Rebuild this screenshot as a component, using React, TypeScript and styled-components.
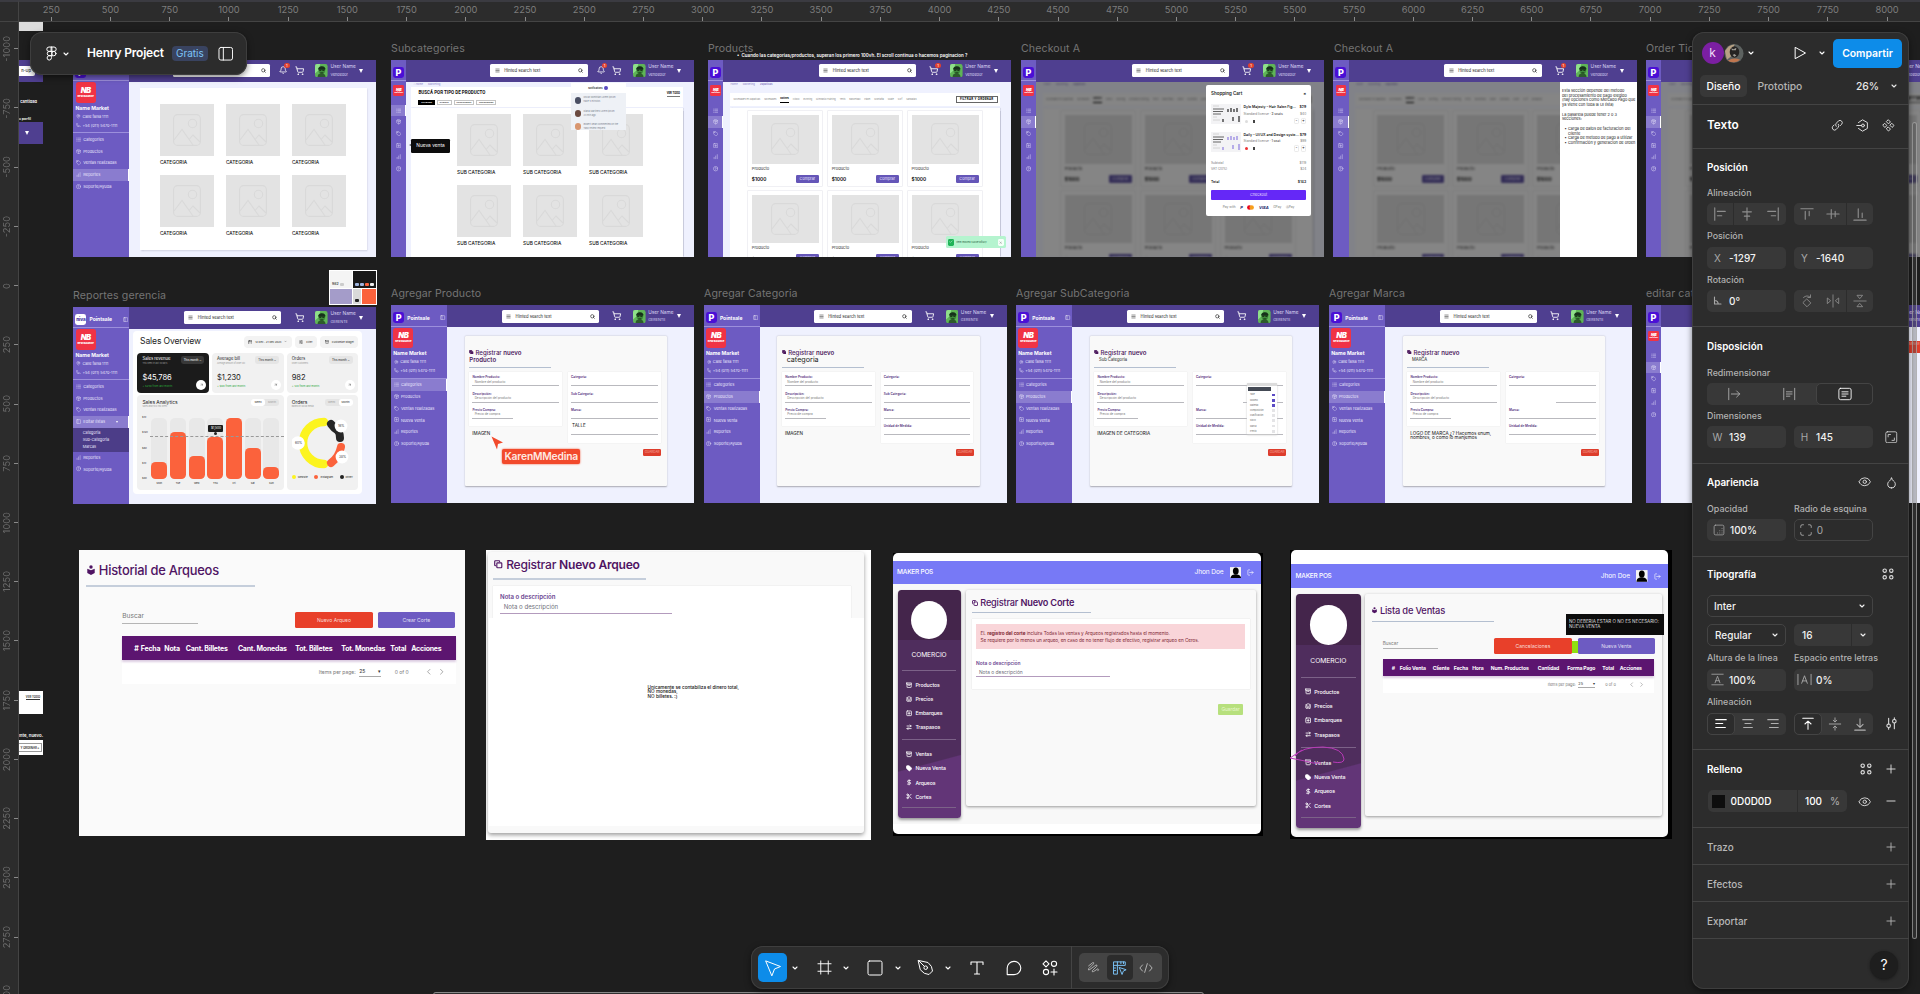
import React from 'react';
import styled, { createGlobalStyle, css } from 'styled-components';
import {
  List, Package, Tag, SquarePlus, ChartNoAxesColumnIncreasing, CircleQuestionMark, Search, Menu, ShoppingCart,
  Bell, MapPin, Phone, PanelLeft, ChevronDown, Eye, Droplet, Plus, Minus, Check, X, LogOut, Copy,
  Calendar, SlidersHorizontal, ArrowUpRight, Archive, Layers, Scissors, DollarSign, ArrowRightLeft, ChevronLeft, ChevronRight,
} from 'lucide-react';

const Global = createGlobalStyle`
  * { box-sizing: border-box; }
  html, body { margin: 0; padding: 0; background: #1e1e1e; overflow: hidden; }
  body { font-family: Inter, "Liberation Sans", sans-serif; -webkit-font-smoothing: antialiased; }
  svg { display: block; flex: none; }
`;

/* ---------- application shell ---------- */

const Shell = styled.div`
  position: relative;
  width: 1920px;
  height: 994px;
  overflow: hidden;
  display: grid;
  grid-template: 22px 972px / 19px 1901px;
  background: #1e1e1e;
`;
const Corner = styled.div`
  background: #2c2c2c;
  border-top: 2px solid #3b3b41;
  border-right: 1px solid #444;
  border-bottom: 1px solid #444;
`;
const RulerTop = styled.div`
  display: flex;
  overflow: hidden;
  background: #2c2c2c;
  border-top: 2px solid #3b3b41;
  border-bottom: 1px solid #444;
  padding-left: 2.7px;
`;
const TopMark = styled.div`
  flex: none;
  width: 59.23px;
  height: 19px;
  display: flex;
  flex-direction: column;
  align-items: center;
  justify-content: space-between;
  font-size: 9.3px;
  line-height: 15px;
  color: #7d7d7d;
  &::after { content: ''; width: 1px; height: 4px; background: #8a8a8a; }
`;
const RulerLeft = styled.div`
  overflow: hidden;
  background: #2c2c2c;
  border-right: 1px solid #444;
`;
const LeftMarks = styled.div`
  margin-top: -2.9px;
  display: flex;
  flex-direction: column;
`;
const LeftMark = styled.div`
  height: 59.23px;
  display: flex;
  align-items: center;
  justify-content: space-between;
  font-size: 9.3px;
  line-height: 13px;
  color: #6c6c6c;
  span { writing-mode: vertical-rl; transform: rotate(180deg); }
  &::after { content: ''; width: 4px; height: 1px; background: #8a8a8a; }
`;
const Canvas = styled.div`
  position: relative;
  overflow: hidden;
`;
const Origin = styled.div`
  position: absolute;
  left: -19px;
  top: -22px;
`;
type Box = { $x: number; $y: number; $w?: number; $h?: number };
const place = css<Box>`
  position: absolute;
  left: ${p => p.$x}px;
  top: ${p => p.$y}px;
  ${p => p.$w && `width: ${p.$w}px;`}
  ${p => p.$h && `height: ${p.$h}px;`}
`;
const FrameName = styled.div<Box>`
  ${place}
  font-size: 10.6px;
  line-height: 14px;
  letter-spacing: 0.1px;
  white-space: nowrap;
  color: #747474;
`;
const Frame = styled.div<Box>`
  ${place}
  overflow: hidden;
  display: flex;
  background: #eff1fe;
`;
const Main = styled.div`
  flex: 1;
  min-width: 0;
  display: flex;
  flex-direction: column;
`;

/* ---------- shop header ---------- */

const Header = styled.div<{ $lead: number }>`
  flex: none;
  height: 21.6px;
  background: #4f3f90;
  display: grid;
  grid-template-columns: ${p => p.$lead}px 97.3px 1fr 61px;
  align-items: center;
  color: #fff;
`;
const SearchBox = styled.div`
  grid-column: 2;
  height: 13.3px;
  border-radius: 1.6px;
  background: #fff;
  color: #222;
  display: flex;
  align-items: center;
  gap: 4.4px;
  padding: 0 4.4px;
  font-size: 4.2px;
  span { flex: 1; white-space: nowrap; }
`;
const HeaderIcons = styled.div`
  display: flex;
  justify-content: flex-end;
  gap: 7px;
  padding-right: 11.5px;
`;
const IconSlot = styled.div`
  position: relative;
`;
const Badge = styled.div`
  position: absolute;
  right: -2px;
  top: -3.4px;
  width: 5.4px;
  height: 5.6px;
  border-radius: 3px;
  background: #e2412f;
  color: #fff;
  font-size: 4px;
  line-height: 5.6px;
  text-align: center;
`;
const User = styled.div`
  display: flex;
  align-items: center;
  gap: 2.4px;
`;
const UserText = styled.div`
  width: 25px;
  font-size: 4.8px;
  line-height: 7.4px;
  white-space: nowrap;
  color: #d9d3f2;
  small { display: block; font-size: 3.8px; }
`;
const Triangle = styled.i<{ $s?: number }>`
  border: ${p => p.$s ?? 2.2}px solid transparent;
  border-top: ${p => (p.$s ?? 2.2) * 2}px solid #fff;
  border-bottom: 0;
  margin-left: 1.6px;
`;

const Face = () => (
  <svg width="12.6" height="13.2" viewBox="0 0 24 25">
    <rect width="24" height="25" rx="4" fill="#5fb457" />
    <path d="M0 4Q0 0 4 0H10L7 12L0 18Z" fill="#8fe08a" />
    <path d="M5 25C5 19 8 18 12 18S20 19 20 25Z" fill="#2d5a2b" />
    <ellipse cx="13" cy="11.5" rx="6.5" ry="7.5" fill="#3f8a3c" />
    <path d="M6 9C7 3 18 2 20 9L19 11H7Z" fill="#16301a" />
    <path d="M8 12H12M14 12H18M10 17H16" stroke="#12240f" strokeWidth="1.8" />
  </svg>
);

const ShopHeader = ({ lead, bell, badge, role = 'GERENTE' }: { lead: number; bell?: boolean; badge?: boolean; role?: string }) => (
  <Header $lead={lead}>
    <SearchBox><Menu size={5} strokeWidth={2.4} /><span>Hinted search text</span><Search size={5} strokeWidth={3} /></SearchBox>
    <HeaderIcons>
      {bell && <IconSlot><Bell size={8.4} strokeWidth={2.2} /><Badge>1</Badge></IconSlot>}
      <IconSlot><ShoppingCart size={9.4} strokeWidth={2.2} />{badge && <Badge>1</Badge>}</IconSlot>
    </HeaderIcons>
    <User><Face /><UserText>User Name<small>{role}</small></UserText><Triangle /></User>
  </Header>
);

/* ---------- shop sidebars ---------- */

const Side = styled.div<{ $w: number }>`
  flex: none;
  width: ${p => p.$w}px;
  background: #6d5bc2;
  color: #e9e5fb;
  display: flex;
  flex-direction: column;
`;
const BrandRow = styled.div<{ $center?: boolean }>`
  height: 21.2px;
  padding: 4.5px 1.6px 0 ${p => (p.$center ? 2 : 2.2)}px;
  border-bottom: 1px solid #9c8fdc;
  display: flex;
  align-items: center;
  gap: 3px;
  font-size: 5px;
  font-weight: 700;
  color: #fff;
  span { flex: 1; white-space: nowrap; }
`;
const PLogo = styled.div<{ $light?: boolean }>`
  flex: none;
  width: 11px;
  height: 11px;
  border-radius: 2.4px;
  background: ${p => (p.$light ? '#fff' : '#4a0fd6')};
  color: ${p => (p.$light ? '#4636a0' : '#fff')};
  font-size: ${p => (p.$light ? 4.6 : 9)}px;
  font-weight: 800;
  line-height: 11px;
  text-align: center;
`;
const RedLogo = styled.div<{ $s: number; $mt: number; $ml: number }>`
  flex: none;
  width: ${p => p.$s}px;
  height: ${p => p.$s}px;
  margin: ${p => p.$mt}px 0 0 ${p => p.$ml}px;
  border-radius: ${p => p.$s * 0.13}px;
  background: #f03345;
  color: #fff;
  font-weight: 900;
  font-style: italic;
  font-size: ${p => p.$s * 0.38}px;
  line-height: ${p => p.$s * 0.4}px;
  letter-spacing: -0.06em;
  padding-top: ${p => p.$s * 0.22}px;
  text-align: center;
  small { display: block; font-style: normal; font-size: ${p => p.$s * 0.13}px; line-height: ${p => p.$s * 0.16}px; letter-spacing: 0; }
`;
const Store = styled.div`
  height: 30.6px;
  border-bottom: 1px solid #9c8fdc;
  padding: 2.2px 0 0 2.2px;
  font-size: 3.8px;
  white-space: nowrap;
  b { display: block; font-size: 5.1px; line-height: 7.4px; color: #fff; }
  div { display: flex; align-items: center; gap: 1.6px; height: 8.6px; padding-left: 0.8px; }
`;
const NavList = styled.div`
  display: flex;
  flex-direction: column;
  padding-top: 0.6px;
`;
const NavItem = styled.div<{ $on?: boolean }>`
  height: 11.7px;
  display: flex;
  align-items: center;
  gap: 2px;
  padding-left: 2.8px;
  font-size: 4px;
  white-space: nowrap;
  background: ${p => (p.$on ? '#8a7ccf' : 'transparent')};
  border-right: ${p => (p.$on ? '1.4px solid #fff' : '0')};
`;
const SubNav = styled.div`
  height: 24px;
  background: #4c3d88;
  padding: 1.4px 0 0 9.5px;
  font-size: 3.8px;
  line-height: 7px;
`;
const RailIcons = styled.div`
  margin-top: 8.6px;
`;
const RailItem = styled.div<{ $on?: boolean }>`
  height: 11.7px;
  display: flex;
  align-items: center;
  justify-content: center;
  background: ${p => (p.$on ? '#8a7ccf' : 'transparent')};
  border-right: ${p => (p.$on ? '1px solid #fff' : '0')};
`;

const navIcons: Record<string, typeof List> = {
  Categories: List, Productos: Package, 'Ventas realizadas': Tag, 'Editar listas': PanelLeft,
  'Nueva venta': SquarePlus, Reportes: ChartNoAxesColumnIncreasing, 'Soporte/Ayuda': CircleQuestionMark,
};

const WideSide = ({ items, active, mrk }: { items: string[]; active: string; mrk?: boolean }) => (
  <Side $w={56.2}>
    <BrandRow><PLogo $light={mrk}>{mrk ? 'niva' : 'P'}</PLogo><span>Pointsale</span><PanelLeft size={5.4} strokeWidth={1.8} /></BrandRow>
    <RedLogo $s={20.2} $mt={1.2} $ml={2.3}>NB<small>new balance</small></RedLogo>
    <Store>
      <b>Name Market</b>
      <div><MapPin size={4.6} />Calle falsa 1111</div>
      <div><Phone size={4.6} />+54 (011) 5470-1111</div>
    </Store>
    <NavList>
      {items.map(n => {
        const Icon = navIcons[n];
        return (
          <React.Fragment key={n}>
            <NavItem $on={n === active}>
              <Icon size={5.2} />{n}{n === 'Editar listas' && <Triangle $s={1.2} style={{ marginLeft: 9 }} />}
            </NavItem>
            {n === 'Editar listas' && <SubNav>Categoria<br />Sub-Categoria<br />Marcas</SubNav>}
          </React.Fragment>
        );
      })}
    </NavList>
  </Side>
);

const Rail = ({ active }: { active: number }) => (
  <Side $w={15.4}>
    <BrandRow $center><PLogo>P</PLogo></BrandRow>
    <RedLogo $s={10.6} $mt={4.2} $ml={2.4}>NB<small>new balance</small></RedLogo>
    <RailIcons>
      {[List, Package, Tag, SquarePlus, ChartNoAxesColumnIncreasing, CircleQuestionMark].map((Icon, i) => (
        <RailItem key={i} $on={i === active}><Icon size={5.4} /></RailItem>
      ))}
    </RailIcons>
  </Side>
);

/* ---------- category boards ---------- */

const Sheet = styled.div`
  flex: 1;
  margin: 6.2px 9.2px 7px 10.6px;
  padding: 16.3px 0 0 19.8px;
  background: #fff;
  box-shadow: 0.6px 1px 1.5px #c9cbdc;
`;
const TileGrid = styled.div`
  display: grid;
  grid-template-columns: repeat(3, 54px);
  column-gap: 12px;
  row-gap: 12.3px;
  font-size: 4.75px;
  font-weight: 500;
  line-height: 6px;
  color: #111;
`;
const Pic = styled.div<{ $h: number }>`
  height: ${p => p.$h}px;
  background: #e3e3e3;
  display: flex;
  align-items: center;
  justify-content: center;
`;
const PicLabel = styled.div`
  padding-top: 2.9px;
  height: 6.8px;
  white-space: nowrap;
`;
const Photo = ({ h }: { h: number }) => (
  <Pic $h={h}>
    <svg width="28" height="32" viewBox="0 0 28 32" fill="none" stroke="#d9d9d9" strokeWidth="1.1">
      <rect x="0.6" y="0.6" width="26.8" height="30.8" rx="4" />
      <circle cx="19.5" cy="9.5" r="4.2" />
      <path d="M1 26L9 15.5L20 31M16 25.5L20 21L27 28" />
    </svg>
  </Pic>
);
const Tiles = ({ text }: { text: string }) => (
  <TileGrid>
    {[0, 1, 2, 3, 4, 5].map(i => <div key={i}><Photo h={51.9} /><PicLabel>{text}</PicLabel></div>)}
  </TileGrid>
);
const Crumbs = styled.div<{ $h: number }>`
  height: ${p => p.$h}px;
  padding-left: 7px;
  font-size: 2.6px;
  line-height: 5.6px;
  color: #8d83c6;
  display: flex;
  gap: 5px;
`;
const Finder = styled.div`
  height: 19.8px;
  margin: 0 11px 0 4.7px;
  padding: 2.8px 3.3px 0 7.4px;
  background: #fff;
  display: flex;
  justify-content: space-between;
`;
const FinderTitle = styled.div`
  font: 700 4.5px/6.6px Roboto, sans-serif;
  color: #111;
  white-space: nowrap;
`;
const Pills = styled.div`
  display: flex;
  gap: 2px;
  margin-top: 2.8px;
`;
const Pill = styled.div<{ $on?: boolean }>`
  height: 5.2px;
  padding: 0 1.8px;
  font: 700 2.4px/3.4px Roboto, sans-serif;
  border: 1px solid ${p => (p.$on ? '#000' : '#c4c4c4')};
  color: ${p => (p.$on ? '#fff' : '#333')};
  background: ${p => (p.$on ? '#000' : '#fff')};
`;
const SeeAll = styled.div`
  align-self: flex-start;
  margin-top: 0.6px;
  font: 700 2.8px/5px Roboto, sans-serif;
  color: #111;
  border-bottom: 1px solid #777;
`;
const SubSheet = styled.div`
  flex: 1;
  margin: 0.7px 11px 0 4.7px;
  padding: 5.9px 0 0 46px;
  background: #fff;
  box-shadow: 0.8px 0 1px #c9cbdc;
`;
const Tooltip = styled.div`
  position: absolute;
  left: 20.2px;
  top: 78.8px;
  width: 38.6px;
  height: 13.8px;
  border-radius: 1.2px;
  background: #0c0c0c;
  color: #fff;
  font-size: 4.8px;
  line-height: 13.8px;
  text-align: center;
  &::before { content: ''; position: absolute; left: -2.6px; top: 5px; border: 1.8px solid transparent; border-left: 0; border-right: 3px solid #0c0c0c; }
`;
const Notes = styled.div`
  position: absolute;
  left: 179.6px;
  top: 22.7px;
  width: 55px;
  height: 47.4px;
  background: #eef1f6;
  font-size: 2.3px;
  color: #7b828e;
`;
const NotesHead = styled.div`
  height: 10.8px;
  background: #fff;
  display: flex;
  align-items: center;
  justify-content: center;
  gap: 1.6px;
  font-weight: 600;
  color: #222;
  i { width: 3.8px; height: 3.8px; border-radius: 50%; background: #5a4bc0; }
`;
const NoteRow = styled.div<{ $c: string }>`
  height: 13.4px;
  display: flex;
  align-items: center;
  gap: 3px;
  padding-left: 4px;
  line-height: 4px;
  &::before { content: ''; width: 6px; height: 7px; border-radius: 3px; background: ${p => p.$c}; }
`;

/* ---------- product board ---------- */

const Veil = styled.div<{ $dim?: boolean }>`
  flex: 1;
  min-height: 0;
  display: flex;
  overflow: hidden;
  background: ${p => (p.$dim ? '#818288' : '#eff1fe')};
`;
const ProductArea = styled.div<{ $dim?: boolean }>`
  flex: 1;
  min-width: 0;
  display: flex;
  flex-direction: column;
  overflow: hidden;
  ${p => p.$dim && 'filter: blur(1px) brightness(0.52) saturate(0.8);'}
`;
const Filters = styled.div`
  flex: none;
  height: 13.6px;
  margin: 0 11.4px 1.2px 6.2px;
  padding: 0 2.2px 0 4px;
  background: #fff;
  display: flex;
  align-items: center;
  gap: 3.9px;
  font-size: 2.3px;
  white-space: nowrap;
  color: #888;
  b { color: #000; line-height: 6px; border-bottom: 1px solid #000; }
`;
const OrderBtn = styled.div`
  margin-left: auto;
  height: 6.8px;
  padding: 0 3px;
  border: 1px solid #666;
  font: 700 3px/5px Roboto, sans-serif;
  letter-spacing: 0.3px;
  color: #000;
`;
const Products = styled.div`
  flex: 1;
  min-height: 0;
  margin: 0 11.4px 0 6.2px;
  padding: 2.8px 0 0 17.6px;
  background: #fff;
  box-shadow: 0.8px 0 1px #c4c6d8;
  display: grid;
  grid-template-columns: repeat(3, 76.2px);
  grid-auto-rows: 76.4px;
  gap: 3.3px 3.7px;
`;
const Product = styled.div`
  padding: 3.8px 3.6px;
  border: 1px solid #f0f0f4;
  border-radius: 1px;
  font-size: 4.1px;
  line-height: 6px;
  color: #333;
  p { margin: 1.8px 0 3.2px; }
`;
const BuyRow = styled.div`
  display: flex;
  align-items: center;
  justify-content: space-between;
  font-size: 4.8px;
  font-weight: 600;
  color: #000;
  span { width: 22.6px; height: 8.4px; border-radius: 1.2px; background: #6556b8; color: #e6e1ff; font-size: 3.8px; font-weight: 400; line-height: 8.4px; text-align: center; }
`;
const Toast = styled.div`
  position: absolute;
  left: 238px;
  top: 176.4px;
  width: 59.5px;
  height: 11.8px;
  border-radius: 1.6px;
  background: #b5f4cf;
  display: flex;
  align-items: center;
  gap: 2.2px;
  padding: 0 1.6px;
  font-size: 2.6px;
  color: #205c38;
  span { flex: 1; white-space: nowrap; }
`;
const ToastIcon = styled.div<{ $ok?: boolean }>`
  width: 6.4px;
  height: 7px;
  border-radius: 1.4px;
  background: ${p => (p.$ok ? '#1fb457' : '#f4fff8')};
  color: ${p => (p.$ok ? '#fff' : '#444')};
  display: flex;
  align-items: center;
  justify-content: center;
`;
const tabs = ['Novedades en Zapatillas', 'Novedades', 'Botines', 'Fútbol', 'Running', 'Gimnasio/Training', 'Tenis', 'Basketball', 'Pádel', 'Montaña', 'Skate', 'Surf', 'Sandalias'];
const ProductBoard = ({ dim }: { dim?: boolean }) => (
  <Veil $dim={dim}>
    <ProductArea $dim={dim}>
      <Crumbs $h={11.2}><span>Home</span><span>Marketing</span><b>Zapatillas</b></Crumbs>
      <Filters>
        {tabs.map(t => (t === 'Botines' ? <b key={t}>{t}</b> : <span key={t}>{t}</span>))}
        <OrderBtn>FILTRAR Y ORDENAR</OrderBtn>
      </Filters>
      <Products>
        {[0, 1, 2, 3, 4, 5].map(i => (
          <Product key={i}><Photo h={48.6} /><p>Producto</p><BuyRow>$1000<span>Comprar</span></BuyRow></Product>
        ))}
      </Products>
    </ProductArea>
  </Veil>
);

/* ---------- checkout overlays ---------- */

const Cart = styled.div`
  position: absolute;
  left: 185.2px;
  top: 25px;
  width: 104.8px;
  height: 130.8px;
  border-radius: 2px;
  background: #fff;
  padding: 5.6px 4.8px 4.6px;
  display: flex;
  flex-direction: column;
  font-size: 3.2px;
  color: #777;
`;
const CartHead = styled.div`
  display: flex;
  justify-content: space-between;
  font-size: 4.5px;
  font-weight: 600;
  line-height: 6px;
  color: #1a1a1a;
  margin-bottom: 7.8px;
`;
const CartItem = styled.div`
  display: flex;
  gap: 2.6px;
  height: 28.4px;
`;
const CartThumb = styled.div`
  width: 30px;
  height: 20px;
  background: #f3f3f5;
`;
const CartInfo = styled.div`
  flex: 1;
  line-height: 5.6px;
`;
const CartLine = styled.div<{ $bold?: boolean; $mt?: number }>`
  display: flex;
  justify-content: space-between;
  align-items: center;
  margin-top: ${p => p.$mt ?? 0}px;
  line-height: 6.2px;
  white-space: nowrap;
  ${p => p.$bold && 'color: #1a1a1a; font-weight: 600; font-size: 3.5px;'}
`;
const Steps = styled.div`
  display: flex;
  gap: 1.4px;
  i { width: 5.6px; height: 6.6px; border: 1px solid #ebebeb; border-radius: 1.2px; font: 600 4px/4px Inter; text-align: center; color: #333; }
`;
const Swatches = styled.div<{ $c: string }>`
  display: flex;
  gap: 5px;
  padding-left: 1.8px;
  &::before { content: ''; width: 3px; height: 3px; border-radius: 50%; background: ${p => p.$c}; }
  &::after { content: ''; width: 2px; height: 3px; background: #444; }
`;
const PayBtn = styled.div`
  height: 10px;
  margin-top: 4.6px;
  border-radius: 1px;
  background: #6528f7;
  color: #e4dcff;
  font-size: 3.8px;
  line-height: 10px;
  text-align: center;
`;
const PayWith = styled.div`
  display: flex;
  align-items: center;
  justify-content: center;
  gap: 4.6px;
  margin-top: 4px;
  line-height: 7px;
  b { font-size: 4px; font-style: italic; color: #17246b; }
  svg { width: 7px; height: 5px; }
`;
const ThumbArt = ({ tone }: { tone: string }) => (
  <CartThumb>
    <svg width="30" height="20" viewBox="0 0 30 20">
      <path d="M2 5H13M2 7.5H12M2 10H10" stroke="#555" strokeWidth="0.9" />
      <path d="M2 2H8M2 13H6M2 16H9" stroke="#ccc" strokeWidth="0.8" />
      <path d="M17 8V5M20 8V4M23 8V5M26 8V4M12 18V15M22 17V13M28 18V12" stroke={tone} strokeWidth="1.2" />
    </svg>
  </CartThumb>
);
const CartPanel = () => (
  <Cart>
    <CartHead><span>Shopping Cart</span><span>×</span></CartHead>
    {[['Dyle Majesty – Hair Salon Fig…', '2 seats', '$29', '$40', '#222', '#ddd'], ['Daily – UI/UX and Design syste…', '1 seat', '$79', '$99', '#8f7fe0', '#e33']].map(r => (
      <CartItem key={r[0]}>
        <ThumbArt tone={r[4]} />
        <CartInfo>
          <CartLine $bold><span>{r[0]}</span><span>{r[2]}</span></CartLine>
          <CartLine><span>Standard license · <b>{r[1]}</b></span><span>{r[3]}</span></CartLine>
          <CartLine $mt={1}><Swatches $c={r[5]} /><Steps><i>-</i><i>+</i></Steps></CartLine>
        </CartInfo>
      </CartItem>
    ))}
    <CartLine $mt={0.5}><span>Subtotal</span><span>$119</span></CartLine>
    <CartLine><span>VAT (20%)</span><span>$24</span></CartLine>
    <CartLine $bold $mt={7}><span>Total</span><span>$143</span></CartLine>
    <PayBtn>Checkout</PayBtn>
    <PayWith>
      Pay with <b>P</b>
      <svg viewBox="0 0 14 10"><circle cx="4.6" cy="5" r="4.4" fill="#eb001b" /><circle cx="9.4" cy="5" r="4.4" fill="#f79e1b" /></svg>
      <b>VISA</b><span>GPay</span><span>ⓐPay</span>
    </PayWith>
  </Cart>
);
const PayInfo = styled.div`
  position: absolute;
  left: 227px;
  top: 21.6px;
  width: 76.4px;
  height: 176px;
  background: #fff;
  color: #222;
  padding: 7.3px 0 0 1.6px;
  font-size: 3.9px;
  line-height: 4.77px;
  white-space: nowrap;
  ul { margin: 4.7px 0 0; padding-left: 6px; list-style: none; }
  li::before { content: '•'; display: inline-block; width: 3.6px; margin-left: -3.6px; }
`;

/* ---------- register forms ---------- */

const FormCard = styled.div`
  width: 202.8px;
  height: 150.8px;
  margin: 8.7px 0 0 17.5px;
  padding: 12.6px 0 0 4.6px;
  background: #f9f9f9;
  border-radius: 1px;
  box-shadow: 0 0.8px 1.6px #a9a9b2;
`;
const FormTitle = styled.div`
  display: flex;
  align-items: center;
  gap: 1.8px;
  height: 8px;
  font-size: 6.1px;
  font-weight: 500;
  color: #4d1a5e;
  white-space: nowrap;
  b { font-weight: 600; }
`;
const FormSub = styled.div<{ $k: string }>`
  height: 8px;
  line-height: 8.6px;
  padding-left: ${p => (p.$k === 'purple' ? 0 : 4.7)}px;
  font-size: ${p => (p.$k === 'purple' ? 6.1 : p.$k === 'big' ? 7.2 : 4.2)}px;
  font-weight: ${p => (p.$k === 'purple' ? 600 : 400)};
  color: ${p => (p.$k === 'purple' ? '#4d1a5e' : '#1a1a1a')};
`;
const Rule = styled.div<{ $w: number; $m: string }>`
  width: ${p => p.$w}px;
  height: 1px;
  margin: ${p => p.$m};
  background: #b4bfd0;
`;
const ThickRule = styled(Rule)`
  height: 1.6px;
  background: #c5cedb;
`;
const FormCols = styled.div`
  display: flex;
  gap: 5.8px;
`;
const FormCol = styled.div`
  width: 92.8px;
  display: flex;
  flex-direction: column;
`;
const FormBox = styled.div<{ $h: number }>`
  height: ${p => p.$h}px;
  padding: 3.7px 3.2px;
  background: #fff;
  box-shadow: 0 0 1px #ddd;
`;
const Field = styled.div<{ $w?: number; $off?: number }>`
  height: 16.2px;
  font-size: 3.05px;
  line-height: 5.2px;
  color: #777;
  b { display: block; height: 4.6px; line-height: 4.6px; font-size: 3.1px; color: #6a4a8c; }
  p { margin: 0; height: 6.4px; width: ${p => p.$w ?? 86.6}px; padding-left: 2.2px; border-bottom: 1px solid #b9b9be; margin-left: ${p => p.$off ?? 0}px; white-space: nowrap; }
`;
const FormNote = styled.div`
  margin: 5.2px 0 0 3px;
  font-size: 4.6px;
  line-height: 4.9px;
  color: #111;
  white-space: pre;
`;
const SaveBtn = styled.div`
  align-self: flex-end;
  width: 17.8px;
  height: 7.8px;
  margin: 6px -0.4px 0 0;
  border-radius: 1.2px;
  background: #dd3d2c;
  color: #f6a99f;
  font-size: 3.1px;
  line-height: 7.8px;
  text-align: center;
`;
const Options = styled.div`
  position: absolute;
  left: 231px;
  top: 77.4px;
  width: 30px;
  height: 51.6px;
  background: #fff;
  box-shadow: 0 0.5px 2px #ccc;
  font-size: 2.2px;
  color: #666;
  header { height: 3.4px; background: #dcdcdc; }
  nav { width: 23px; height: 4px; margin: 0.6px 0 1.6px 1px; background: #444a55; }
`;
const Option = styled.div<{ $on: boolean }>`
  height: 5.2px;
  display: flex;
  align-items: center;
  justify-content: space-between;
  padding: 0 2px 0 3px;
  &::after { content: ''; width: 2.6px; height: 2.8px; background: ${p => (p.$on ? '#5b4bc4' : '#e4e4e6')}; }
`;

const fullNav = ['Categories', 'Productos', 'Ventas realizadas', 'Nueva venta', 'Reportes', 'Soporte/Ayuda'];

type FormProps = { x: number; active: string; sub: string; kind: string; note: string; right: string[]; off?: number; menu?: boolean };
const FormFrame = ({ x, active, sub, kind, note, right, off, menu }: FormProps) => (
  <Frame $x={x} $y={305.4} $w={303.2} $h={197.2}>
    <WideSide items={fullNav} active={active} />
    <Main>
      <ShopHeader lead={54.6} />
      <FormCard>
        <FormTitle><Copy size={4.4} strokeWidth={3.4} fill="#4d1a5e" /><span>Registrar <b>nuevo</b></span></FormTitle>
        <FormSub $k={kind}>{sub}</FormSub>
        <Rule $w={81.6} $m="2.3px 0 4.2px" />
        <FormCols>
          <FormCol>
            <FormBox $h={54.6}>
              <Field><b>Nombre Producto:</b><p>Nombre del producto</p></Field>
              <Field><b>Descripción:</b><p>Descripción del producto</p></Field>
              <Field $w={40.6}><b>Precio Compra:</b><p>Precio de compra</p></Field>
            </FormBox>
            <FormNote>{note}</FormNote>
          </FormCol>
          <FormCol>
            <FormBox $h={70.8}>
              {right.map((r, i) => (
                <Field key={i} $w={i === 1 && off ? 86.6 - off : undefined} $off={i === 1 ? off : 0}>
                  {r === 'TALLE' ? <FormNote style={{ height: 4.6, margin: '0 0 0 1px' }}>{r}</FormNote> : <b>{r}</b>}<p />
                </Field>
              ))}
            </FormBox>
            <SaveBtn>GUARDAR</SaveBtn>
          </FormCol>
        </FormCols>
      </FormCard>
    </Main>
    {menu && (
      <Options><header /><nav />
        {['Talle', 'Modelo', 'Material', 'Composición', 'Clasificación', 'Stock', 'Marca', 'Precio'].map((o, i) => <Option key={o} $on={i < 3}>{o}</Option>)}
      </Options>
    )}
  </Frame>
);

/* ---------- sales dashboard ---------- */

const Dash = styled.div`
  width: 228.8px;
  height: 162.8px;
  margin: 2.6px 0 0 4px;
  padding: 5px 4px 4px;
  border-radius: 4px;
  background: #fff;
  display: flex;
  flex-direction: column;
  gap: 2.4px;
  color: #1c1c1c;
`;
const DashHead = styled.div`
  height: 14px;
  display: flex;
  align-items: flex-start;
  gap: 3.4px;
  padding-left: 2.6px;
  h3 { flex: 1; margin: 0; font-size: 8.6px; line-height: 11.6px; font-weight: 400; letter-spacing: -0.15px; white-space: nowrap; }
`;
const Chip = styled.div<{ $w: number }>`
  width: ${p => p.$w}px;
  height: 11.6px;
  border-radius: 4px;
  background: #f3f3f3;
  display: flex;
  align-items: center;
  justify-content: center;
  gap: 3px;
  font-size: 2.6px;
  white-space: nowrap;
`;
const DashRow = styled.div<{ $h: number }>`
  height: ${p => p.$h}px;
  display: flex;
  gap: 2.6px;
`;
const Card = styled.div<{ $w: number; $dark?: boolean }>`
  position: relative;
  width: ${p => p.$w}px;
  border-radius: 4px;
  padding: 3.6px 5px;
  background: ${p => (p.$dark ? '#1b1b1b' : '#f1f1f1')};
  color: ${p => (p.$dark ? '#fff' : '#1c1c1c')};
  font-size: 4.2px;
  line-height: 6px;
`;
const CardHead = styled.div`
  display: flex;
  justify-content: space-between;
  white-space: nowrap;
  small { display: block; font-size: 2.1px; line-height: 4px; color: #999; }
`;
const ChartTitle = styled.div`
  font-size: 4.9px;
`;
const MonthTag = styled.div<{ $dark?: boolean }>`
  height: 8px;
  padding: 0 3px;
  border-radius: 2.4px;
  font-size: 2.8px;
  line-height: 8px;
  background: ${p => (p.$dark ? '#383838' : '#e5e5e5')};
`;
const Toggle = styled.div<{ $right?: boolean }>`
  height: 7.6px;
  margin-top: -0.4px;
  border-radius: 2.4px;
  background: #e5e5e5;
  display: flex;
  font-size: 2.7px;
  line-height: 7.6px;
  color: #999;
  span { width: 14px; text-align: center; border-radius: 2.4px; }
  span:${p => (p.$right ? 'last' : 'first')}-child { background: #fff; color: #222; }
`;
const Amount = styled.div`
  margin-top: 6.4px;
  font-size: 7.6px;
  line-height: 10px;
  letter-spacing: -0.1px;
`;
const Gain = styled.div`
  margin-top: 0.8px;
  font-size: 2.7px;
  color: #2aa83a;
`;
const GoDot = styled.div`
  position: absolute;
  right: 3px;
  bottom: 3px;
  width: 10px;
  height: 10px;
  border-radius: 50%;
  background: #fff;
  color: #222;
  display: flex;
  align-items: center;
  justify-content: center;
`;
const Chart = styled.div`
  display: flex;
  gap: 2.7px;
  margin-top: 8.6px;
  padding-left: 8.8px;
  font-size: 2.6px;
  text-align: center;
`;
const Axis = styled.div`
  position: absolute;
  left: 4.6px;
  top: 15px;
  font-size: 2.5px;
  line-height: 15.1px;
`;
const Track = styled.div`
  width: 16px;
  height: 61.4px;
  border-radius: 5px;
  background: #e8e8e8;
  display: flex;
  align-items: flex-end;
  margin-bottom: 1px;
`;
const Bar = styled.div<{ $h: number }>`
  width: 16px;
  height: ${p => p.$h}px;
  border-radius: 4.6px;
  background: #fb623c;
`;
const Dotted = styled.div`
  position: absolute;
  left: 13px;
  right: 0;
  top: 41px;
  border-top: 1px dashed #999;
`;
const BarTip = styled.div`
  position: absolute;
  left: 71px;
  top: 29.5px;
  width: 15px;
  height: 7px;
  border-radius: 1px;
  background: #1b1b1b;
  color: #fff;
  font-size: 3.2px;
  line-height: 7px;
  text-align: center;
  &::after { content: ''; position: absolute; left: 6px; top: 7.4px; width: 3px; height: 3px; border-radius: 50%; background: #222; }
`;
const Legend = styled.div`
  display: flex;
  justify-content: space-between;
  margin-top: 3px;
  font-size: 2.7px;
  span::before { content: ''; display: inline-block; width: 4px; height: 4px; border-radius: 50%; background: var(--c); vertical-align: -0.8px; margin-right: 2px; }
`;
const LegendItem = styled.span<{ $c: string }>`--c: ${p => p.$c};`;

const Dashboard = () => (
  <Dash>
    <DashHead>
      <h3>Sales Overview</h3>
      <Chip $w={48}><Calendar size={4.6} /><span>12 Dec - 21 Dec 2023</span><ChevronDown size={3} /></Chip>
      <Chip $w={22}><SlidersHorizontal size={4} />Filter</Chip>
      <Chip $w={38}><Archive size={4} />Customize widget</Chip>
    </DashHead>
    <DashRow $h={40.6}>
      {[['Sales revenue', 'This week in last 30 days', '$45,786', '+ $250 from last month'], ['Average bill', 'Average amount of order bill', '$1,230', '+ $68 from last month'], ['Orders', 'Order customers', '982', '+ 120 from last month']].map((c, i) => (
        <Card key={c[0]} $w={i === 2 ? 71 : 72} $dark={i === 0}>
          <CardHead><div>{c[0]}<small>{c[1]}</small></div><MonthTag $dark={i === 0}>This month ⌄</MonthTag></CardHead>
          <Amount>{c[2]}</Amount>
          <Gain>{c[3]}</Gain>
          <GoDot><ArrowUpRight size={3.6} /></GoDot>
        </Card>
      ))}
    </DashRow>
    <DashRow $h={95}>
      <Card $w={146.6}>
        <CardHead><ChartTitle>Sales Analytics<small>Sales analytics this week</small></ChartTitle><Toggle><span>Week</span><span>Month</span></Toggle></CardHead>
        <Axis>$1K<br />$12K<br />$6K<br />$1K<br />$0K</Axis>
        <Chart>
          {[['Mon', 17], ['Tue', 47.3], ['Wed', 23.3], ['Thu', 41.7], ['Fri', 61.3], ['Sat', 30.7], ['Sun', 11.7]].map(([d, h]) => (
            <div key={d}><Track><Bar $h={h as number} /></Track>{d}</div>
          ))}
        </Chart>
        <Dotted /><BarTip>$1,500</BarTip>
      </Card>
      <Card $w={71}>
        <CardHead><ChartTitle>Orders<small>Based on social media</small></ChartTitle><Toggle $right><span>Week</span><span>Month</span></Toggle></CardHead>
        <svg width="62" height="58" viewBox="-2 0 62 58" style={{ marginTop: 4 }} fill="none" strokeWidth="8" strokeLinecap="round">
          <path d="M30 9A21 21 0 1 0 30 51" stroke="#fcf41f" strokeWidth="8.6" />
          <path d="M37 11Q40 15 43 17T46 25" stroke="#262626" />
          <path d="M47 34Q45 44 37 50" stroke="#fb623c" />
          <circle cx="47" cy="13" r="6.4" fill="#fff" /><circle cx="4" cy="30" r="6.8" fill="#fff" /><circle cx="48" cy="44" r="6.4" fill="#fff" />
          <g fill="#333" fontSize="3.2" fontFamily="Inter"><text x="44" y="14">16%</text><text x="1" y="31">60%</text><text x="45" y="45">38%</text></g>
        </svg>
        <Legend><LegendItem $c="#fcf41f">Website</LegendItem><LegendItem $c="#fb623c">Instagram</LegendItem><LegendItem $c="#222">Other</LegendItem></Legend>
      </Card>
    </DashRow>
  </Dash>
);

const Thumb = styled.div<Box>`
  ${place}
  background: #fff;
  padding: 1px;
  display: grid;
  grid-template-columns: 22px 8px 14px;
  grid-template-rows: 16.5px 15.5px;
  gap: 1px;
`;
const ThumbCell = styled.div<{ $c: string; $span?: boolean }>`
  background: ${p => p.$c};
  ${p => p.$span && 'grid-column: span 2;'}
  padding: 2px;
  display: flex;
  align-items: flex-end;
  gap: 1px;
  font-size: 3.6px;
  i { width: 4px; height: 3px; border-radius: 1px; }
`;

/* ---------- cash-count boards ---------- */

const Page = styled.div<Box>`
  ${place}
  background: #fafafa;
  overflow: hidden;
`;
const PageTitle = styled.div<{ $s: number; $m: string; $k?: string }>`
  display: flex;
  align-items: center;
  gap: 0.3em;
  margin: ${p => p.$m};
  height: 1.4em;
  font-size: ${p => p.$s}px;
  font-weight: 500;
  letter-spacing: -0.02em;
  color: #4f1463;
  white-space: nowrap;
  b { font-weight: 600; }
`;
const Toolbar = styled.div<{ $m: string; $gap: number }>`
  display: flex;
  margin: ${p => p.$m};
  gap: ${p => p.$gap}px;
`;
const FindInput = styled.div<{ $w: number; $s: number; $mr: number }>`
  width: ${p => p.$w}px;
  margin-right: ${p => p.$mr}px;
  height: ${p => p.$s * 1.9}px;
  font-size: ${p => p.$s}px;
  color: #777;
  border-bottom: 1px solid #b5b5b5;
`;
const Action = styled.div<{ $c: string; $s?: number }>`
  width: 77.4px;
  height: 16.2px;
  border-radius: 1.6px;
  background: ${p => p.$c};
  color: rgba(255, 255, 255, 0.8);
  font-size: ${p => p.$s ?? 5}px;
  line-height: 16.2px;
  text-align: center;
`;
const Table = styled.div<{ $w: number; $m: string }>`
  width: ${p => p.$w}px;
  margin: ${p => p.$m};
  background: #fff;
`;
const Thead = styled.div<{ $h: number; $s: number; $pad: number; $cols: string }>`
  height: ${p => p.$h}px;
  padding-left: ${p => p.$pad}px;
  display: grid;
  grid-template-columns: ${p => p.$cols};
  align-items: center;
  background: #5c1570;
  box-shadow: 0 1.5px 2px #dccde2;
  color: #fff;
  font-size: ${p => p.$s}px;
  font-weight: 700;
  letter-spacing: -0.03em;
  white-space: nowrap;
`;
const Pager = styled.div<{ $h: number; $s: number }>`
  height: ${p => p.$h}px;
  padding-right: 9px;
  display: flex;
  align-items: center;
  justify-content: flex-end;
  gap: ${p => p.$s * 0.7}px;
  font-size: ${p => p.$s}px;
  color: #777;
  u { display: flex; justify-content: space-between; width: 4.4em; text-decoration: none; color: #333; border-bottom: 1px solid #aaa; line-height: 1.7em; }
  em { font-style: normal; margin: 0 2.4em 0 2em; }
`;
const PagerBar = ({ h, s }: { h: number; s: number }) => (
  <Pager $h={h} $s={s}>Items per page: <u>25 <span>▾</span></u><em>0 of 0</em><ChevronLeft size={s * 1.9} strokeWidth={1.6} /><ChevronRight size={s * 1.9} strokeWidth={1.6} /></Pager>
);
const Reader = ({ s }: { s: number }) => (
  <svg width={s} height={s * 1.3} viewBox="0 0 14 18" fill="#4f1463"><circle cx="7" cy="3.4" r="3" /><path d="M0.5 6.5L7 9L13.5 6.500V14L7 17.500L0.500 14Z" /></svg>
);
const Inner = styled.div`
  width: 376px;
  height: 281px;
  margin: 2px 0 0 2px;
  padding-top: 0.1px;
  background: #f9f9f9;
  border-radius: 3px;
  box-shadow: 0 2px 4px #9c9c9c;
`;
const NoteBox = styled.div<{ $m: string; $w: number; $h: number; $p: string }>`
  width: ${p => p.$w}px;
  height: ${p => p.$h}px;
  margin: ${p => p.$m};
  padding: ${p => p.$p};
  background: #fff;
  box-shadow: 0 0 1px #ccc;
`;
const NoteField = styled.div<{ $s: number; $w: number }>`
  width: ${p => p.$w}px;
  font-size: ${p => p.$s}px;
  color: #6f6f7a;
  border-bottom: 1px solid #b39bbd;
  b { display: block; font-weight: 600; line-height: 1.6em; color: #6b4590; }
  span { display: block; padding-left: 0.6em; line-height: 1.7em; }
`;
const BlankArea = styled.div`
  height: 208px;
  margin: 0 0 0 1px;
  background: #fff;
  padding: 67px 0 0 158.6px;
  font-size: 4.65px;
  font-weight: 500;
  line-height: 4.75px;
  color: #111;
  white-space: nowrap;
`;

/* ---------- Maker POS boards ---------- */

const Backing = styled.div<Box>`
  ${place}
  background: #000;
`;
const Pos = styled.div<{ $w: number; $h: number; $top: number; $pad: number; $m: number }>`
  position: relative;
  width: ${p => p.$w}px;
  height: ${p => p.$h}px;
  margin-left: ${p => p.$m}px;
  border-radius: 5px;
  overflow: hidden;
  background: linear-gradient(#fff 20px, #f8f8f8 20px, #f8f8f8 calc(100% - ${p => p.$pad}px), #fff calc(100% - ${p => p.$pad}px));
  padding-top: ${p => p.$top}px;
`;
const PosHead = styled.div<{ $h: number }>`
  height: ${p => p.$h}px;
  padding: 0 7px 0 4.6px;
  display: flex;
  align-items: center;
  gap: 6px;
  background: #7779f6;
  color: #fff;
  font-size: 6.6px;
  letter-spacing: -0.1px;
  b { flex: 1; font-weight: 500; font-size: 6.5px; letter-spacing: -0.25px; }
`;
const PosBody = styled.div<{ $gap: number }>`
  display: flex;
  gap: ${p => p.$gap}px;
  padding: 6px 0 0 5px;
`;
const PosSide = styled.div<{ $em: number }>`
  position: relative;
  flex: none;
  font-size: ${p => p.$em}px;
  width: 6.3em;
  height: 22.8em;
  border-radius: 0.35em;
  background: linear-gradient(165deg, transparent 74%, #623577 74.5%), linear-gradient(#44254b 0 22%, #4f2d5d 22% 78%, #5a3170);
  box-shadow: 0 2px 3px #999;
  color: #fff;
  padding: 1.1em 0.45em 0;
  display: flex;
  flex-direction: column;
`;
const Circle = styled.div`
  align-self: center;
  flex: none;
  width: 3.65em;
  height: 3.85em;
  border-radius: 50%;
  background: #fff;
`;
const Shop = styled.div`
  height: 3.2em;
  border-bottom: 1px solid #7c6288;
  text-align: center;
  padding-top: 1.38em;
  line-height: 0;
  span { font-size: 0.66em; letter-spacing: -0.01em; }
`;
const PosNav = styled.div<{ $pt?: number }>`
  height: 6.85em;
  padding: ${p => p.$pt ?? 0.66}em 0 0 0.42em;
  border-bottom: 1px solid #7c6288;
`;
const PosItem = styled.div`
  height: 1.407em;
  display: flex;
  align-items: center;
  gap: 0.3em;
  svg { width: 0.62em; height: 0.66em; }
  span { font-size: 0.52em; font-weight: 500; white-space: nowrap; letter-spacing: -0.02em; }
`;
const PosCard = styled.div<{ $w: number; $h: number }>`
  width: ${p => p.$w}px;
  height: ${p => p.$h}px;
  background: #f9f9f9;
  border-radius: 2px;
  box-shadow: 0 1px 3px #999;
  padding-top: 0.1px;
`;
const Alert = styled.div`
  height: 24.8px;
  padding: 5.2px 4.6px;
  background: #f9d5d9;
  color: #7d2533;
  font-size: 4.65px;
  line-height: 7.2px;
  white-space: nowrap;
  letter-spacing: -0.03px;
`;
const Guardar = styled.div`
  width: 25px;
  height: 11.4px;
  margin: 14.6px 0 0 252.6px;
  border-radius: 1px;
  background: #b7e07d;
  color: #e9f8d2;
  font-size: 4.8px;
  line-height: 11.4px;
  text-align: center;
`;
const LimeGap = styled.div`
  width: 6px;
  height: 12px;
  margin-top: 3px;
  background: #8fe010;
`;
const BlackNote = styled.div<Box>`
  ${place}
  background: #0d0d0d;
  color: #ddd;
  font-size: 4.5px;
  line-height: 4.9px;
  padding: 5.6px 0 0 3.4px;
  white-space: nowrap;
`;
const Scribble = styled.svg<Box>`${place}`;

const PosSidebar = ({ em }: { em: number }) => (
  <PosSide $em={em}>
    <Circle />
    <Shop><span>COMERCIO</span></Shop>
    <PosNav>
      {([['Productos', Archive], ['Precios', Layers], ['Embarques', SquarePlus], ['Traspasos', ArrowRightLeft]] as const).map(([t, I]) => <PosItem key={t}><I strokeWidth={3} /><span>{t}</span></PosItem>)}
    </PosNav>
    <PosNav $pt={0.74}>
      {([['Ventas', Archive], ['Nueva Venta', Tag], ['Arqueos', DollarSign], ['Cortes', Scissors]] as const).map(([t, I]) => <PosItem key={t}><I strokeWidth={3} fill={t === 'Nueva Venta' ? '#fff' : 'none'} /><span>{t}</span></PosItem>)}
    </PosNav>
  </PosSide>
);
const PosTop = ({ h }: { h: number }) => (
  <PosHead $h={h}>
    <b>MAKER POS</b>Jhon Doe
    <svg width="11.6" height="11.8" viewBox="0 0 24 24"><rect width="24" height="24" fill="#f4f4f4" /><ellipse cx="12" cy="8" rx="6" ry="7.4" fill="#000" /><path d="M1 24C1 17 7 15 12 15S23 17 23 24Z" fill="#000" /></svg>
    <LogOut size={7} strokeWidth={2} />
  </PosHead>
);

/* ---------- clipped pieces at the left edge ---------- */

const Scrap = styled.div<Box & { $bg: string; $fg?: string; $s?: number }>`
  ${place}
  overflow: hidden;
  background: ${p => p.$bg};
  color: ${p => p.$fg ?? '#fff'};
  font-size: ${p => p.$s ?? 4}px;
  font-weight: 600;
  white-space: nowrap;
  display: flex;
  align-items: center;
  justify-content: flex-end;
  padding-right: 3px;
`;
const WhiteTag = styled.span`
  height: 10px;
  margin-right: 5px;
  padding: 0 4px;
  background: #fff;
  color: #444;
  border-radius: 0 2px 2px 0;
  line-height: 10px;
`;
const Underlined = styled.span`border-bottom: 1px solid #333;`;
const Outlined = styled.span`border: 1px solid #999; padding: 1.5px 2px; margin-right: -2px;`;
const BulletNote = styled.div<Box>`
  ${place}
  font-size: 4.5px;
  line-height: 6px;
  font-weight: 600;
  color: #fff;
  white-space: pre;
`;

/* ---------- collaborator cursor ---------- */

const CursorTag = styled.div<Box>`
  ${place}
  border-radius: 2px;
  background: #f24a2c;
  color: #ffe9e2;
  font-size: 10.3px;
  font-weight: 600;
  letter-spacing: -0.2px;
  line-height: 15.4px;
  text-align: center;
  box-shadow: 0 0 2px #f24a2c;
`;
const CursorArrow = styled.svg<Box>`${place}`;

/* ---------- floating editor chrome ---------- */

const Float = styled.div<Box>`
  ${place}
  background: #2c2c2c;
  border-radius: 12px;
  box-shadow: inset 0 0 0 1px #3e3e3e, 0 2px 6px rgba(0, 0, 0, 0.5);
  color: #fff;
`;
const FileBar = styled(Float)`
  display: flex;
  align-items: center;
  padding-left: 14.5px;
`;
const FileName = styled.div`
  margin-left: 15px;
  font-size: 12px;
  font-weight: 600;
  letter-spacing: -0.2px;
  padding-bottom: 2px;
  white-space: nowrap;
`;
const Plan = styled.div`
  margin: 0 10px 0 8px;
  width: 36px;
  height: 15px;
  border-radius: 4px;
  background: #394360;
  color: #7cc4f8;
  font-size: 10px;
  line-height: 15px;
  text-align: center;
`;
const Props = styled(Float)`
  display: flex;
  flex-direction: column;
  overflow: hidden;
`;
const ShareRow = styled.div`
  height: 42px;
  display: flex;
  align-items: center;
  padding: 0 7px 0 9.6px;
`;
const Initial = styled.div`
  width: 22px;
  height: 22px;
  border-radius: 50%;
  background: #7b1fa2;
  color: #f0ddf7;
  font-size: 12px;
  line-height: 21px;
  text-align: center;
`;
const Share = styled.div`
  width: 69px;
  height: 29px;
  margin-left: auto;
  border-radius: 5px;
  background: #0d8ce9;
  font-size: 10.4px;
  font-weight: 600;
  line-height: 29px;
  text-align: center;
`;
const TabRow = styled.div`
  height: 30.3px;
  display: flex;
  align-items: flex-start;
  padding: 1px 0 0 8px;
  font-size: 10.3px;
  font-weight: 500;
  line-height: 22px;
  color: #b3b3b3;
`;
const Tab = styled.div`
  width: 47px;
  height: 22px;
  margin-right: 10.4px;
  border-radius: 5px;
  background: #383838;
  color: #fff;
  text-align: center;
`;
const Zoom = styled.div`
  margin-left: auto;
  width: 53px;
  display: flex;
  align-items: center;
  gap: 12px;
  color: #e8e8e8;
`;
const Section = styled.div<{ $h: number }>`
  flex: none;
  height: ${p => p.$h}px;
  border-top: 1px solid #444;
  padding-left: 15px;
`;
const SecTitle = styled.div<{ $h?: number; $mt?: number; $big?: boolean; $dim?: boolean }>`
  height: ${p => p.$h ?? 23}px;
  margin-top: ${p => p.$mt ?? 7}px;
  padding-right: ${p => (p.$big ? 14.5 : 11.5)}px;
  display: flex;
  align-items: center;
  justify-content: space-between;
  font-size: ${p => (p.$big ? 11.8 : 9.9)}px;
  font-weight: ${p => (p.$dim ? 500 : 600)};
  color: ${p => (p.$dim ? '#b8b8b8' : '#fff')};
`;
const SideIcons = styled.div<{ $gap: number }>`
  display: flex;
  align-items: center;
  gap: ${p => p.$gap}px;
  color: #e0e0e0;
`;
const Labels = styled.div<{ $h?: number; $mt?: number }>`
  height: ${p => p.$h ?? 20}px;
  margin-top: ${p => p.$mt ?? 0}px;
  display: grid;
  grid-template-columns: 87px 1fr;
  align-items: center;
  font-size: 8.9px;
  font-weight: 500;
  color: #b3b3b3;
  white-space: nowrap;
`;
const Controls = styled.div<{ $mt?: number }>`
  height: 22px;
  margin-top: ${p => p.$mt ?? 0}px;
  display: flex;
  align-items: center;
  gap: 8px;
`;
const Input = styled.div<{ $w?: number; $outline?: boolean; $pl?: number }>`
  width: ${p => p.$w ?? 79}px;
  height: 22px;
  border-radius: 5px;
  background: ${p => (p.$outline ? 'transparent' : '#383838')};
  border: ${p => (p.$outline ? '1px solid #444' : '0')};
  display: flex;
  align-items: center;
  padding-left: ${p => p.$pl ?? 3.5}px;
  padding-right: 7px;
  font-size: 10px;
  font-weight: 500;
  color: #f2f2f2;
`;
const Prefix = styled.span`
  width: 14px;
  display: flex;
  justify-content: center;
  margin-right: 4.5px;
  font-weight: 400;
  color: #a8a8a8;
`;
const Segments = styled.div<{ $w?: number }>`
  width: ${p => p.$w ?? 79}px;
  height: 22px;
  border-radius: 5px;
  background: #383838;
  display: flex;
`;
const Seg = styled.div<{ $on?: boolean; $cut?: boolean; $dim?: boolean }>`
  flex: 1;
  display: flex;
  align-items: center;
  justify-content: center;
  color: ${p => (p.$dim ? '#8d8d8d' : p.$on ? '#fff' : '#b0b0b0')};
  ${p => p.$on && 'background: #2c2c2c; border: 1px solid #444; border-radius: 5px;'}
  ${p => p.$cut && 'border-left: 1px solid #2c2c2c;'}
`;
const Grow = styled.span`flex: 1;`;
const SplitChevron = styled.div`
  width: 22px;
  height: 22px;
  margin-right: -7px;
  border-left: 1px solid #2c2c2c;
  display: flex;
  align-items: center;
  justify-content: center;
`;
const FillSwatch = styled.div`
  width: 12.5px;
  height: 12.5px;
  margin: 0 6px 0 -2px;
  background: #0d0d0d;
`;
const FillInput = styled.div`
  width: 139px;
  height: 22px;
  margin-left: 1px;
  border-radius: 5px;
  background: #383838;
  display: grid;
  grid-template-columns: 89px 50px;
  font-size: 10px;
  font-weight: 500;
`;
const FillHex = styled.div`
  display: flex;
  align-items: center;
  padding-left: 6px;
`;
const FillPct = styled.div`
  display: flex;
  align-items: center;
  border-left: 1px solid #2c2c2c;
  padding: 0 7px;
  justify-content: space-between;
  span { color: #aaa; }
`;
const Help = styled.div`
  width: 28px;
  height: 28px;
  margin: 12px 0 0 163px;
  border-radius: 50%;
  background: #1e1e1e;
  font-size: 14px;
  line-height: 28px;
  text-align: center;
  box-shadow: 0 1px 3px #1a1a1a;
`;
const ScrollV = styled.div<Box>`
  ${place}
  border: 1px solid rgba(175, 175, 175, 0.7);
  background: rgba(80, 80, 80, 0.35);
  border-radius: 3px;
`;
const ToolDock = styled(Float)`
  display: flex;
  align-items: center;
  padding-left: 7px;
`;
const Tool = styled.div<{ $w: number; $ml?: number; $on?: boolean }>`
  width: ${p => p.$w}px;
  height: 29px;
  margin-left: ${p => p.$ml ?? 0}px;
  border-radius: 5px;
  background: ${p => (p.$on ? '#0d8ce9' : 'transparent')};
  display: flex;
  align-items: center;
  justify-content: center;
`;
const DockLine = styled.div`
  width: 1px;
  height: 43px;
  margin: 0 7px 0 5px;
  background: #444;
`;
const Modes = styled.div`
  width: 83px;
  height: 29px;
  border-radius: 5px;
  background: #444;
  display: flex;
  padding: 2px;
`;
const Mode = styled.div<{ $on?: boolean }>`
  flex: 1;
  border-radius: 4px;
  display: flex;
  align-items: center;
  justify-content: center;
  color: ${p => (p.$on ? '#7cc4f8' : '#b8b8b8')};
  background: ${p => (p.$on ? '#2c2c2c' : 'transparent')};
`;

/* Stroke glyph drawn from path data */
const G = ({ d, s = 14, w = 1, vb = 16, children }: { d?: string; s?: number; w?: number; vb?: number; children?: React.ReactNode }) => (
  <svg width={s} height={s} viewBox={`0 0 ${vb} ${vb}`} fill="none" stroke="currentColor" strokeWidth={w} strokeLinecap="round" strokeLinejoin="round">
    {d && <path d={d} />}{children}
  </svg>
);
const Chev = () => <G s={6} vb={6} w={1.1} d="M1 2L3 4L5 2" />;
const Dots4 = () => <G s={12} vb={12} w={1.1}><circle cx="2.7" cy="2.7" r="1.7" /><circle cx="9.3" cy="2.7" r="1.7" /><circle cx="2.7" cy="9.3" r="1.7" /><circle cx="9.3" cy="9.3" r="1.7" /></G>;

const Inspector = () => (
  <Props $x={1692} $y={32} $w={217} $h={957}>
    <ShareRow>
      <Initial>k</Initial>
      <svg width="20" height="21" viewBox="0 0 21 21"><circle cx="10.5" cy="10.5" r="10" fill="#5d6260" /><path d="M1 8Q5 1 11 1L7 14L3 17Z" fill="#b7a184" /><path d="M4 18Q10 14 17 17Q11 22 4 18" fill="#c0764f" /><ellipse cx="11" cy="9" rx="5" ry="6" fill="#252322" /><path d="M7.500 5L10 6L13 4.500L12.500 7H8.500ZM9 12L11 11L13 12.500L11 14Z" fill="#9d9a94" /></svg>
      <Tool $w={16} $ml={-0.5}><Chev /></Tool>
      <Tool $w={18} $ml={31.5}><G s={14} vb={14} d="M2.5 1.5L12.5 7L2.5 12.5Z" /></Tool>
      <Tool $w={18} $ml={4}><Chev /></Tool>
      <Share>Compartir</Share>
    </ShareRow>
    <TabRow><Tab>Diseño</Tab>Prototipo<Zoom>26% <Chev /></Zoom></TabRow>
    <Section $h={43.7}>
      <SecTitle $big $h={34} $mt={3}>Texto
        <SideIcons $gap={12.6}>
          <G s={12.5} d="M6.6 9.4A3 3 0 0 1 6.8 5.4L9.6 2.4A3 3 0 0 1 13.8 6.6L12 8.4M9.4 6.6A3 3 0 0 1 9.2 10.6L6.4 13.6A3 3 0 0 1 2.2 9.4L4 7.6" w={1.2} />
          <G s={13} w={1.2} d="M3 4.4L8 1L14 4.4V11.6L8 15L3 11.6M1 8H7"><circle cx="8.6" cy="8" r="1.8" /></G>
          <G s={13} w={1.2}><path d="M8 1.2L10.4 3.6L8 6L5.6 3.6ZM8 10L10.4 12.4L8 14.8L5.6 12.4ZM3.6 5.6L6 8L3.6 10.4L1.2 8ZM12.4 5.6L14.8 8L12.4 10.4L10 8Z" /></G>
        </SideIcons>
      </SecTitle>
    </Section>
    <Section $h={178.3}>
      <SecTitle>Posición</SecTitle>
      <Labels $mt={4}>Alineación</Labels>
      <Controls>
        <Segments>
          <Seg $dim><G w={1.3} d="M2 1V15M5 5H14M5 10H10" /></Seg>
          <Seg $dim $cut><G w={1.3} d="M8 1V15M3 5.5H13M5 10.5H11" /></Seg>
          <Seg $dim><G w={1.3} d="M14 1V15M11 5H2M11 10H6" /></Seg>
        </Segments>
        <Segments>
          <Seg $dim><G w={1.3} d="M1 2H15M6 5V14M10.5 5V10" /></Seg>
          <Seg $dim><G w={1.3} d="M1 8H15M6 3V13M10.5 5V11" /></Seg>
          <Seg $dim $cut><G w={1.3} d="M1 15H15M6 2V12M10.5 7V12" /></Seg>
        </Segments>
      </Controls>
      <Labels $h={22}>Posición</Labels>
      <Controls><Input><Prefix>X</Prefix>-1297</Input><Input><Prefix>Y</Prefix>-1640</Input></Controls>
      <Labels $h={21}>Rotación</Labels>
      <Controls>
        <Input><Prefix><G s={9} vb={9} w={1.1} d="M1.5 1V8H8M1.5 4.5Q5 4.5 5.2 8" /></Prefix>0°</Input>
        <Segments>
          <Seg $dim><G d="M8 6L12.4 10.2L8 14.6L3.6 10.2ZM4 4Q8 0.4 11.6 3.6M12 1V4H9" /></Seg>
          <Seg $dim><G d="M8 1V15M1.5 5V11L5 8ZM14.5 5V11L11 8Z" /></Seg>
          <Seg $dim $cut><G d="M1 8H15M5 1.5H11L8 5ZM5 14.5H11L8 11Z" /></Seg>
        </Segments>
      </Controls>
    </Section>
    <Section $h={136.3}>
      <SecTitle>Disposición</SecTitle>
      <Labels $mt={5.5}>Redimensionar</Labels>
      <Controls>
        <Segments $w={166}>
          <Seg><G d="M2 1.5V14.5M5 8H14.5M11 4.5L14.5 8L11 11.5" /></Seg>
          <Seg><G d="M2 1.5V14.5M14.5 1.5V14.5M5 5.5H11.5M5 8H11.5M5 10.5H9" /></Seg>
          <Seg $on><G d="M4.5 5.5H11.5M4.5 8H11.5M4.5 10.5H9"><rect x="1" y="1.5" width="14" height="13" rx="2" /></G></Seg>
        </Segments>
      </Controls>
      <Labels $h={21}>Dimensiones</Labels>
      <Controls>
        <Input><Prefix>W</Prefix>139</Input><Input><Prefix>H</Prefix>145</Input>
        <SideIcons $gap={0} style={{ marginLeft: 4 }}><G s={12.5}><rect x="1" y="1" width="14" height="14" rx="2" /><path d="M4 7.5V4.5H7M12 9V12H9" /></G></SideIcons>
      </Controls>
    </Section>
    <Section $h={93}>
      <SecTitle>Apariencia<SideIcons $gap={13}><Eye size={13.5} strokeWidth={1.6} /><Droplet size={13} strokeWidth={1.8} /></SideIcons></SecTitle>
      <Labels $mt={5}><span>Opacidad</span><span>Radio de esquina</span></Labels>
      <Controls>
        <Input $pl={4.5}><Prefix><G s={12}><rect x="1.5" y="1.5" width="13" height="13" rx="2" /><path d="M6 12H6.1M9 12H9.1M9 9H9.1M12 12H12.1M12 9H12.1M12 6H12.1" /></G></Prefix>100%</Input>
        <Input $outline><Prefix><G s={12} w={1.3} d="M1 4.5V3Q1 1 3 1H4.5M11.5 1H13Q15 1 15 3V4.5M15 11.5V13Q15 15 13 15H11.5M4.5 15H3Q1 15 1 13V11.5" /></Prefix><Prefix style={{ width: 6 }}>0</Prefix></Input>
      </Controls>
    </Section>
    <Section $h={193.7}>
      <SecTitle $mt={6}>Tipografía<SideIcons $gap={0} style={{ marginRight: 3.5 }}><Dots4 /></SideIcons></SecTitle>
      <Controls $mt={9.4}><Input $w={166} $outline $pl={6}><Grow>Inter</Grow><Chev /></Input></Controls>
      <Controls $mt={7}>
        <Input $outline $pl={7}><Grow>Regular</Grow><Chev /></Input>
        <Input $pl={8}><Grow>16</Grow><SplitChevron><Chev /></SplitChevron></Input>
      </Controls>
      <Labels $h={23}><span>Altura de la línea</span><span>Espacio entre letras</span></Labels>
      <Controls>
        <Input><Prefix><G s={13} d="M1 1.5H15M1 14.5H15M5 12L8 4L11 12M6 9.5H10" /></Prefix>100%</Input>
        <Input><Prefix><G s={15} d="M1 2.5V13.5M15 2.5V13.5M5 12L8 4L11 12M6 9.5H10" /></Prefix>0%</Input>
      </Controls>
      <Labels $h={22}>Alineación</Labels>
      <Controls>
        <Segments>
          <Seg $on><G w={1.2} d="M2 3H14M2 7.5H10M2 12H13" /></Seg>
          <Seg><G w={1.2} d="M2 3H14M4.5 7.5H11.5M3 12H13" /></Seg>
          <Seg><G w={1.2} d="M2 3H14M6 7.5H14M4 12H14" /></Seg>
        </Segments>
        <Segments>
          <Seg $on><G w={1.2} d="M2 1.5H14M8 14V5M4.5 8L8 4.6L11.5 8" /></Seg>
          <Seg><G d="M1.5 8H14.5M8 1V5.5M6 3.8L8 5.6L10 3.8M8 15V10.5M6 12.2L8 10.4L10 12.2" /></Seg>
          <Seg><G w={1.2} d="M2 15H14M8 2V11.5M4.5 8.4L8 11.8L11.5 8.4" /></Seg>
        </Segments>
        <SideIcons $gap={0} style={{ marginLeft: 4 }}><G s={13} w={1.3} d="M4.5 1.5V8.5M4.5 13V15M11.5 7.5V14.5M11.5 1V3"><circle cx="4.5" cy="10.7" r="2.2" /><circle cx="11.5" cy="5.2" r="2.2" /></G></SideIcons>
      </Controls>
    </Section>
    <Section $h={78}>
      <SecTitle>Relleno<SideIcons $gap={12}><Dots4 /><Plus size={14} strokeWidth={1.6} /></SideIcons></SecTitle>
      <Controls $mt={10}>
        <FillInput><FillHex><FillSwatch />0D0D0D</FillHex><FillPct>100<span>%</span></FillPct></FillInput>
        <SideIcons $gap={12} style={{ marginLeft: 3 }}><Eye size={13.5} strokeWidth={1.6} /><Minus size={14} strokeWidth={1.6} /></SideIcons>
      </Controls>
    </Section>
    {['Trazo', 'Efectos', 'Exportar'].map(t => (
      <Section key={t} $h={37}><SecTitle $dim $h={37} $mt={0.5}>{t}<Plus size={14} strokeWidth={1.5} /></SecTitle></Section>
    ))}
    <Section $h={50}><Help>?</Help></Section>
  </Props>
);

const Dock = () => (
  <ToolDock $x={751} $y={946} $w={418} $h={43}>
    <Tool $w={29} $on><G s={18} vb={18} d="M2 2L16.5 7.5L10.5 10L8 16.5Z" /></Tool>
    <Tool $w={15}><Chev /></Tool>
    <Tool $w={32} $ml={6}><G s={15} d="M4 1V15M12 1V15M1 4H15M1 12H15" /></Tool>
    <Tool $w={11}><Chev /></Tool>
    <Tool $w={32} $ml={8}><G s={16}><rect x="1" y="1" width="14" height="14" rx="1.6" /></G></Tool>
    <Tool $w={13}><Chev /></Tool>
    <Tool $w={32} $ml={5.5}><G s={17} vb={17} d="M1.5 1.5L11 3.5Q15.5 7 15.5 12L12 15.5Q7 15.5 3.5 11ZM1.5 1.5L7.4 7.4"><circle cx="8.7" cy="8.7" r="1.8" /></G></Tool>
    <Tool $w={12} $ml={0.5}><Chev /></Tool>
    <Tool $w={32} $ml={6.5}><G s={16} d="M2 4.5V2H14V4.5M8 2V14M5.5 14H10.5" w={1.1} /></Tool>
    <Tool $w={32} $ml={5}><G s={16} d="M1.2 14.6V8A6.8 6.6 0 1 1 8 14.6Z" w={1.1} /></Tool>
    <Tool $w={32} $ml={4}><G s={16} w={1.1} d="M4 0.8L7 3.8L4 6.8L1 3.8ZM12 9V15M9 12H15"><circle cx="12" cy="3.8" r="2.6" /><circle cx="4" cy="12" r="2.6" /></G></Tool>
    <DockLine />
    <Modes>
      <Mode><G s={13} w={1.1} d="M2 6L7 2Q9 1.5 8 3.5L2 9.5Q1 12 3.5 10.5L11 5Q13 4.5 12 6.5L6.5 12Q6 14 8 13L13.5 9.5Q15 9.5 13.5 12" /></Mode>
      <Mode $on><G s={14} w={1.1} d="M1 1H14V5H5V15H1ZM5 1V5H1M9 1V3M12 1V3M1 8H3M1 11H3M7.5 7.5L15 10L11.8 11.5L10.5 15Z" /></Mode>
      <Mode><G s={14} w={1.1} d="M4 4.5L1 8L4 11.5M12 4.5L15 8L12 11.5M9.5 3L6.5 13" /></Mode>
    </Modes>
  </ToolDock>
);

const W = 303.2;
const H = 197.2;

const names: [number, number, string][] = [
  [391, 42, 'Subcategories'], [708, 42, 'Products'], [1021, 42, 'Checkout A'], [1334, 42, 'Checkout A'], [1646, 42, 'Order Ticket'],
  [73, 289, 'Reportes gerencia'], [391, 287, 'Agregar Producto'], [704, 287, 'Agregar Categoria'], [1016, 287, 'Agregar SubCategoria'],
  [1329, 287, 'Agregar Marca'], [1646, 287, 'editar categoria'],
];

export default function App() {
  return (
    <Shell>
      <Global />
      <Corner />
      <RulerTop>{Array.from({ length: 32 }, (_, i) => <TopMark key={i}>{(i + 1) * 250}</TopMark>)}</RulerTop>
      <RulerLeft><LeftMarks>{Array.from({ length: 17 }, (_, i) => <LeftMark key={i}><span>{-1000 + i * 250}</span></LeftMark>)}</LeftMarks></RulerLeft>
      <Canvas>
        <Origin>
          {names.map(([x, y, t], i) => <FrameName key={i} $x={x} $y={y}>{t}</FrameName>)}
          <BulletNote $x={737} $y={53}>•  Cuando las categorias/productos, superan los primero 100vh. El scroll continua o hacemos paginacion ?</BulletNote>

          <Scrap $x={19} $y={22} $w={24} $h={9} $bg="#dcdcdc" />
          <Scrap $x={19} $y={60} $w={24} $h={21.5} $bg="#4f3f90"><WhiteTag>n-Up</WhiteTag></Scrap>
          <Scrap $x={0} $y={97} $w={40} $h={8} $bg="transparent">cantidad</Scrap>
          <Scrap $x={0} $y={116} $w={34} $h={6} $bg="transparent" $s={3.6}>tu perfil</Scrap>
          <Scrap $x={0} $y={122} $w={43} $h={21.5} $bg="#4f3f90"><Triangle style={{ marginRight: 11 }} /></Scrap>
          <Scrap $x={0} $y={691} $w={43.2} $h={22.5} $bg="#fff" $fg="#111" $s={2.8}><Underlined style={{ marginBottom: 9 }}>VER TODO</Underlined></Scrap>
          <Scrap $x={0} $y={731} $w={46} $h={8} $bg="transparent" $s={4.3}>cliente, nuevo.</Scrap>
          <Scrap $x={0} $y={740} $w={43.2} $h={15} $bg="#fff" $fg="#111" $s={2.8}><Outlined>Y ORDENAR ≡</Outlined></Scrap>

          <Frame $x={73.3} $y={60} $w={W} $h={H}>
            <WideSide items={['Categories', 'Productos', 'Ventas realizadas', 'Reportes', 'Soporte/Ayuda']} active="Reportes" />
            <Main><ShopHeader lead={43.6} bell role="Vendedor" /><Sheet><Tiles text="CATEGORIA" /></Sheet></Main>
          </Frame>

          <Frame $x={391} $y={60} $w={W} $h={H}>
            <Rail active={0} />
            <Main>
              <ShopHeader lead={84} bell role="Vendedor" />
              <Crumbs $h={5.8}><span>⌂ Home</span><span>Marketing</span></Crumbs>
              <Finder>
                <div>
                  <FinderTitle>BUSCÁ POR TIPO DE PRODUCTO</FinderTitle>
                  <Pills><Pill $on>CALZADO</Pill><Pill>SHORTS</Pill><Pill>PANTALONES</Pill><Pill>ACCESORIOS</Pill></Pills>
                </div>
                <SeeAll>VER TODO</SeeAll>
              </Finder>
              <SubSheet><Tiles text="SUB CATEGORIA" /></SubSheet>
            </Main>
            <Tooltip>Nueva venta</Tooltip>
            <Notes>
              <NotesHead>Notifications <i /></NotesHead>
              <NoteRow $c="#4a4f63"><span>Oscar Dominian Lorem ipsum<br />hace 5 minutos</span></NoteRow>
              <NoteRow $c="#6b4a40"><span>Diana Martinez Lorem ipsum<br />23 min ago</span></NoteRow>
              <NoteRow $c="#d89670"><span>Robert Dean commented on the<br />Task review request</span></NoteRow>
            </Notes>
          </Frame>

          <Frame $x={708} $y={60} $w={W} $h={H}>
            <Rail active={1} />
            <Main><ShopHeader lead={95.6} badge role="Vendedor" /><ProductBoard /></Main>
            <Toast><ToastIcon $ok><Check size={3.6} strokeWidth={3} /></ToastIcon><span>Item moved successfully.</span><ToastIcon><X size={3.4} /></ToastIcon></Toast>
          </Frame>

          <Frame $x={1021} $y={60} $w={W} $h={H}>
            <Rail active={1} />
            <Main><ShopHeader lead={95.6} badge role="Vendedor" /><ProductBoard dim /></Main>
            <CartPanel />
          </Frame>

          <Frame $x={1333.4} $y={60} $w={W} $h={H}>
            <Rail active={1} />
            <Main><ShopHeader lead={95.6} badge role="Vendedor" /><ProductBoard dim /></Main>
            <PayInfo>
              Esta sección depende del metodo<br />del procesamiento de pago elegido<br />(hay opciones como Mercado Pago que<br />ya viene con toda la UI lista)<br /><br />
              La pasarela puede tener 2 o 3<br />secciones:
              <ul><li>Carga de datos de facturacion del<br />cliente</li><li>Carga de metodo de pago a utilizar</li><li>Confirmación y generacion de orden</li></ul>
            </PayInfo>
          </Frame>

          <Frame $x={1646} $y={60} $w={W} $h={H}>
            <Rail active={1} />
            <Main><ShopHeader lead={95.6} badge role="Vendedor" /><ProductBoard dim /></Main>
          </Frame>

          <Thumb $x={329} $y={270} $w={47.6} $h={35}>
            <ThumbCell $c="#f4f4f4">982<i style={{ background: '#ccc' }} /></ThumbCell>
            <ThumbCell $c="#191919" $span><i style={{ background: '#9db3dd' }} /><i style={{ background: '#9db3dd' }} /><i style={{ background: '#fb623c' }} /><i style={{ background: '#eee' }} /></ThumbCell>
            <ThumbCell $c="#a49cc9" /><ThumbCell $c="#d9d9d9"><i style={{ background: '#222' }} /></ThumbCell><ThumbCell $c="#fb623c" />
          </Thumb>

          <Frame $x={73.3} $y={307} $w={W} $h={H}>
            <WideSide mrk items={['Categories', 'Productos', 'Ventas realizadas', 'Editar listas', 'Reportes', 'Soporte/Ayuda']} active="Editar listas" />
            <Main><ShopHeader lead={54.6} /><Dashboard /></Main>
          </Frame>

          <FormFrame x={391} active="Categories" sub="Producto" kind="purple" note="IMAGEN" right={['Categoria:', 'Sub Categoria:', 'Marca:', 'TALLE']} />
          <FormFrame x={703.7} active="Productos" sub="categoria" kind="big" note="IMAGEN" right={['Categoria:', 'Sub Categoria:', 'Marca:', 'Unidad de Medida:']} />
          <FormFrame x={1016} active="Productos" sub="Sub Categoria" kind="small" note="IMAGEN DE CATEGORIA" right={['Categoria:', '', 'Marca:', 'Unidad de Medida:']} off={47} menu />
          <FormFrame x={1329} active="Productos" sub="MARCA" kind="small" note={'LOGO DE MARCA ¿? Hacemos enum,\nnombres, o como lo manjemos'} right={['Categoria:', '', 'Marca:', 'Unidad de Medida:']} off={47} />

          <Frame $x={1646} $y={305.4} $w={W} $h={H}>
            <Rail active={1} />
            <Main><ShopHeader lead={95.6} /><SaveBtn style={{ width: 46, height: 12, margin: '14px 14px 0 0' }}>ELIMINAR</SaveBtn></Main>
          </Frame>

          <CursorArrow $x={491} $y={436} $w={13} $h={14} viewBox="0 0 13 14"><path d="M0.5 0.5L12 6.5L7 8L6 13.5Z" fill="#f24a2c" /></CursorArrow>
          <CursorTag $x={502.3} $y={449} $w={78} $h={15.4}>KarenMMedina</CursorTag>

          <Page $x={79} $y={550} $w={386} $h={286.4}>
            <PageTitle $s={12.9} $m="11.4px 0 0 8px"><Reader s={8} />Historial de Arqueos</PageTitle>
            <ThickRule $w={169} $m="6px 0 24.6px 7px" />
            <Toolbar $m="0 0 8.6px 43.3px" $gap={5}>
              <FindInput $w={76} $s={6.6} $mr={92}>Buscar</FindInput>
              <Action $c="#e8402a">Nuevo Arqueo</Action><Action $c="#6d5bc2">Crear Corte</Action>
            </Toolbar>
            <Table $w={333.4} $m="0 0 0 43.3px">
              <Thead $h={23.7} $s={7} $pad={12} $cols="6.5px 23.5px 21.4px 52.2px 57.4px 46px 49px 21px 1fr">
                {['#', 'Fecha', 'Nota', 'Cant. Billetes', 'Cant. Monedas', 'Tot. Billetes', 'Tot. Monedas', 'Total', 'Acciones'].map(t => <span key={t}>{t}</span>)}
              </Thead>
              <PagerBar h={24} s={5} />
            </Table>
          </Page>

          <Page $x={486} $y={550} $w={384.5} $h={290} style={{ background: '#fff' }}>
            <Inner>
              <PageTitle $s={12.1} $m="4px 0 0 6px"><Copy size={8.5} strokeWidth={3.2} /><span>Registrar <b>Nuevo Arqueo</b></span></PageTitle>
              <ThickRule $w={153} $m="5px 0 6.4px 5px" />
              <NoteBox $m="0 0 0 5px" $w={358} $h={31.6} $p="6.4px 7px 0">
                <NoteField $s={6.1} $w={172}><b>Nota o descripción</b><span>Nota o descripción</span></NoteField>
              </NoteBox>
              <BlankArea>Unicamente se contabiliza el dinero total,<br />NO monedas,<br />NO billetes. :)</BlankArea>
            </Inner>
          </Page>

          <Backing $x={892.5} $y={552.7} $w={370} $h={283.5}>
            <Pos $w={368.7} $h={281.3} $top={8.3} $pad={10} $m={0}>
              <PosTop h={23} />
              <PosBody $gap={5}>
                <PosSidebar em={10} />
                <PosCard $w={290} $h={216}>
                  <PageTitle $s={9.2} $m="6.2px 0 0 6px"><Copy size={6} strokeWidth={3.4} /><span>Registrar <b>Nuevo Corte</b></span></PageTitle>
                  <Rule $w={119} $m="3.2px 0 6px 6px" />
                  <NoteBox $m="0 0 0 6px" $w={278} $h={70} $p="5px 4.5px">
                    <Alert>EL <b>registro del corte</b> incluira Todas las ventas y Arqueos registrados hasta el momento.<br />Se requiere por lo menos un arqueo, en caso de no tener flujo de efectivo, registrar arqueo en Ceros.</Alert>
                    <NoteField $s={4.9} $w={134} style={{ marginTop: 11 }}><b>Nota o descripción</b><span>Nota o descripción</span></NoteField>
                  </NoteBox>
                  <Guardar>Guardar</Guardar>
                </PosCard>
              </PosBody>
            </Pos>
          </Backing>

          <Backing $x={1290} $y={550} $w={382} $h={289}>
            <Pos $w={376.5} $h={287} $top={14.4} $pad={0} $m={1}>
              <PosTop h={23.8} />
              <PosBody $gap={4.6}>
                <PosSidebar em={10.24} />
                <PosCard $w={296.5} $h={221.5}>
                  <PageTitle $s={9.3} $m="9.5px 0 0 7px"><Reader s={5} />Lista de Ventas</PageTitle>
                  <Rule $w={122} $m="4.6px 0 15.4px 6.5px" />
                  <Toolbar $m="0 0 5px 17.7px" $gap={0}>
                    <FindInput $w={55} $s={4.7} $mr={56.5} style={{ marginTop: 2.5 }}>Buscar</FindInput>
                    <Action $c="#e8402a">Cancelaciones</Action><LimeGap /><Action $c="#6d5bc2">Nueva Venta</Action>
                  </Toolbar>
                  <Table $w={271} $m="0 0 0 17.7px">
                    <Thead $h={17.3} $s={5.1} $pad={9} $cols="8px 33px 21px 18.4px 18.6px 47px 29.6px 35px 17.4px 1fr">
                      {['#', 'Folio Venta', 'Cliente', 'Fecha', 'Hora', 'Num. Productos', 'Cantidad', 'Forma Pago', 'Total', 'Acciones'].map(t => <span key={t}>{t}</span>)}
                    </Thead>
                    <PagerBar h={17} s={3.8} />
                  </Table>
                </PosCard>
              </PosBody>
            </Pos>
          </Backing>
          <BlackNote $x={1565.5} $y={614} $w={98} $h={20.7}>NO DEBERIA ESTAR O NO ES NECESARIO:<br />NUEVA VENTA</BlackNote>
          <Scribble $x={1289} $y={745.5} $w={58} $h={20} viewBox="0 0 58 20" fill="none" stroke="#b93ab8" strokeWidth="1">
            <path d="M13 4L1 12L16 15Q24 18 32 17M6 10Q12 1 34 1Q54 2 55 13Q55 18 44 16" />
          </Scribble>
        </Origin>
      </Canvas>

      <ScrollV $x={1911.5} $y={122} $w={5.5} $h={816.5} />
      <ScrollV $x={433} $y={991.5} $w={771} $h={6} />
      <FileBar $x={29.5} $y={32} $w={217} $h={43}>
        <G s={15} vb={15} w={1}><path d="M7.5 1H5A2.2 2.2 0 0 0 5 5.4H7.5ZM7.5 1H10A2.2 2.2 0 0 1 10 5.4H7.5ZM7.5 5.4H5A2.2 2.2 0 0 0 5 9.7H7.5ZM7.5 9.7H5A2.2 2.2 0 1 0 7.5 12Z" /><circle cx="9.8" cy="7.6" r="2.2" /></G>
        <Tool $w={12} $ml={1}><Chev /></Tool>
        <FileName>Henry Project</FileName>
        <Plan>Gratis</Plan>
        <G s={15.5}><rect x="1" y="1.5" width="14" height="13" rx="2" /><path d="M5.5 1.5V14.5" /></G>
      </FileBar>
      <Inspector />
      <Dock />
    </Shell>
  );
}
